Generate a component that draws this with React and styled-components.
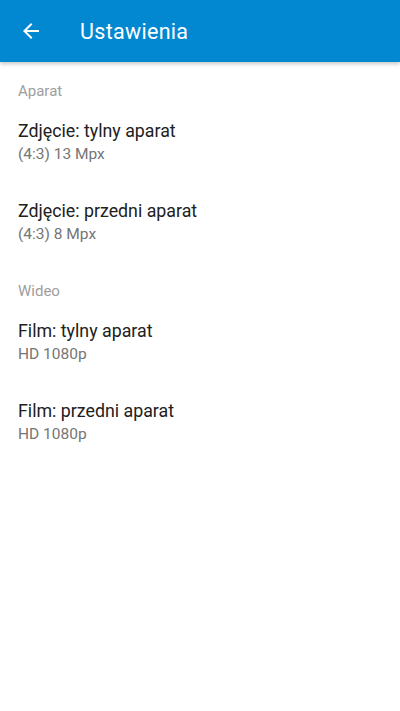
import styled, { createGlobalStyle } from "styled-components"

const Global = createGlobalStyle`
    body {
        margin: 0;
        background: #ffffff;
        font-family: Roboto, "Noto Sans", sans-serif;
    }
`

const Screen = styled.div`
    display: flex;
    flex-direction: column;
    width: 400px;
    min-height: 711px;
    background: #ffffff;
`

const Toolbar = styled.header`
    display: flex;
    align-items: center;
    height: 62px;
    padding: 0 0 0 19px;
    background-color: #0288d1;
    box-shadow: 0 2px 4px rgba(0, 0, 0, 0.22);
    position: relative;
    z-index: 1;
`

const BackButton = styled.div`
    display: flex;
    width: 24px;
    height: 24px;
    margin-right: 37px;
`

const Title = styled.h1`
    margin: 0;
    font-size: 21.5px;
    font-weight: 400;
    color: #ffffff;
    letter-spacing: 0.3px;
`

const List = styled.div`
    display: flex;
    flex-direction: column;
    padding-top: 8px;
`

const Category = styled.div`
    height: 40px;
    box-sizing: border-box;
    padding: 13px 18px 0 18px;
    font-size: 15px;
    line-height: 16px;
    color: #9e9e9e;
`

const Item = styled.div`
    display: flex;
    flex-direction: column;
    height: 80px;
    box-sizing: border-box;
    padding: 10px 18px 0 18px;
`

const ItemTitle = styled.div`
    font-size: 17.8px;
    line-height: 22px;
    color: #212121;
`

const ItemSummary = styled.div`
    margin-top: 2px;
    font-size: 15.5px;
    line-height: 20px;
    color: #757575;
`

const sekcje = [
    {
        nazwa: "Aparat",
        pozycje: [
            { tytul: "Zdjęcie: tylny aparat", opis: "(4:3) 13 Mpx" },
            { tytul: "Zdjęcie: przedni aparat", opis: "(4:3) 8 Mpx" },
        ],
    },
    {
        nazwa: "Wideo",
        pozycje: [
            { tytul: "Film: tylny aparat", opis: "HD 1080p" },
            { tytul: "Film: przedni aparat", opis: "HD 1080p" },
        ],
    },
]

export default function App() {
    return (
        <Screen>
            <Global />
            <Toolbar>
                <BackButton>
                    <svg width="24" height="24" viewBox="0 0 24 24">
                        <path fill="#ffffff" d="M20 11H7.83l5.59-5.59L12 4l-8 8 8 8 1.41-1.41L7.83 13H20v-2z" />
                    </svg>
                </BackButton>
                <Title>Ustawienia</Title>
            </Toolbar>
            <List>
                {sekcje.map((s) => (
                    <div key={s.nazwa}>
                        <Category>{s.nazwa}</Category>
                        {s.pozycje.map((p) => (
                            <Item key={p.tytul}>
                                <ItemTitle>{p.tytul}</ItemTitle>
                                <ItemSummary>{p.opis}</ItemSummary>
                            </Item>
                        ))}
                    </div>
                ))}
            </List>
        </Screen>
    )
}
